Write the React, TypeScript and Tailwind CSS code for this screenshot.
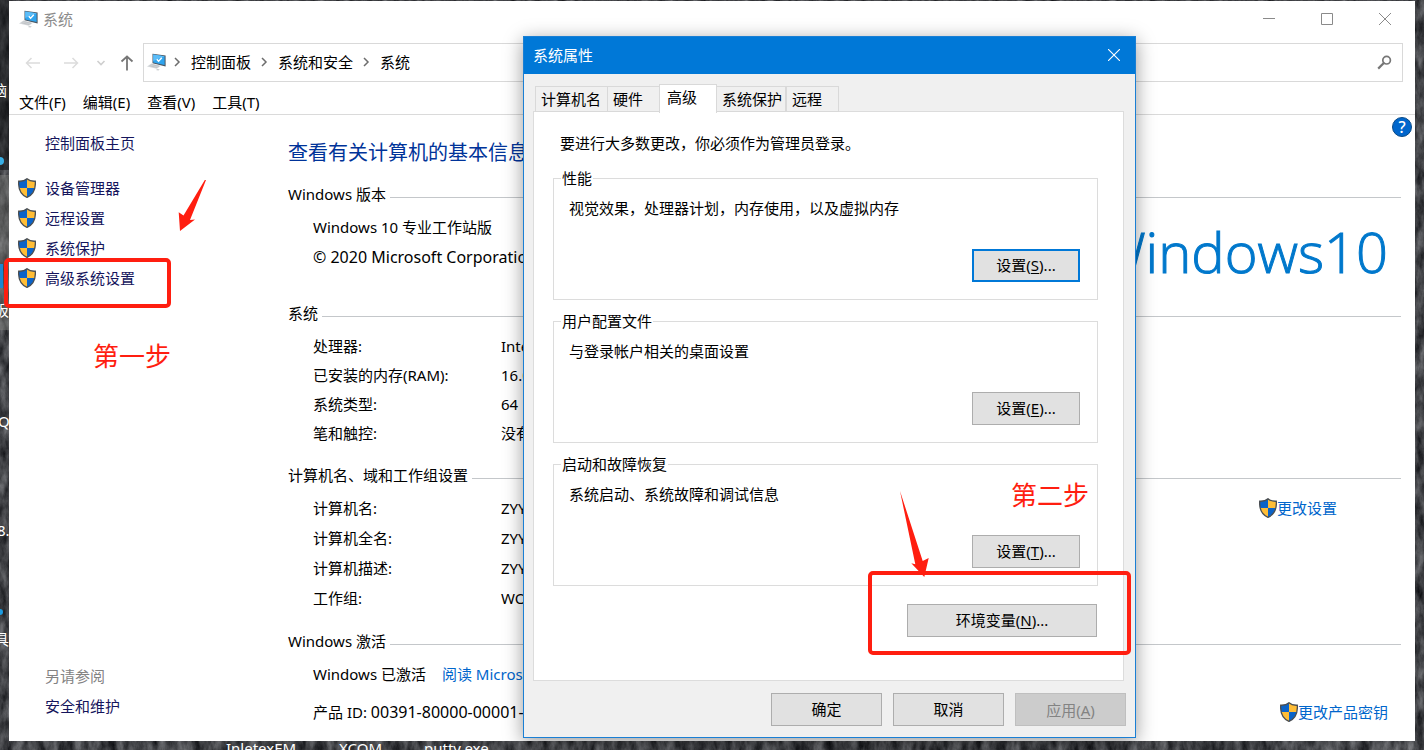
import React from "react";

const SHIELD = "M9 0.8C11 2.6 14 3.4 17.3 3.2C17.8 10.5 15.5 16.5 9 19.4C2.5 16.5 0.2 10.5 0.7 3.2C4 3.4 7 2.6 9 0.8Z";

function Shield({ id }: { id: string }) {
  return (
    <svg width="18" height="20" viewBox="0 0 18 20" className="shrink-0" aria-hidden="true">
      <clipPath id={id}>
        <path d={SHIELD} />
      </clipPath>
      <g clipPath={`url(#${id})`}>
        <path d="M0 0H9V10H0ZM9 10H18V20H9Z" fill="#0b63c8" />
        <path d="M9 0H18V10H9ZM0 10H9V20H0Z" fill="#ffbd36" />
      </g>
      <path d={SHIELD} fill="none" stroke="#4a4e52" strokeWidth="1.3" />
    </svg>
  );
}

function ComputerIcon() {
  return (
    <svg width="20" height="18" viewBox="0 0 20 18" className="shrink-0" aria-hidden="true">
      <path d="M5.5 0.8L18.6 2.6V13.4L5.5 10.2Z" fill="#4a5560" />
      <path d="M6.2 1.5L17.6 3.2V12L6.2 9.6Z" fill="#2fa4ee" />
      <path d="M6.2 1.5L17.6 3.2L6.2 8Z" fill="#5cbdf8" />
      <path d="M9.8 6.2L11.6 8.2L14.8 4.8" fill="none" stroke="#fff" strokeWidth="1.4" />
      <path d="M4.4 10.6L14 12.8L9.8 15.8L0 13.4Z" fill="#d3d6d9" />
      <path d="M4.5 11.6L12 13.3M2.8 12.8L10.4 14.6" stroke="#b3b7bb" strokeWidth="0.6" />
      <path d="M10.6 16L12.8 16.4L11.4 17.6L8.8 17Z" fill="#c6c9cc" />
    </svg>
  );
}

function Chevron() {
  return (
    <svg width="8" height="10" viewBox="0 0 8 10" className="shrink-0" aria-hidden="true">
      <path d="M2 1L6 5L2 9" fill="none" stroke="#6d6d6d" strokeWidth="1.5" />
    </svg>
  );
}

function Section({ title, className, children }: { title: string; className: string; children: React.ReactNode }) {
  return (
    <section className={className}>
      <div className="flex h-[34px] items-center gap-1">
        <h2 className="pb-[2px] whitespace-nowrap">{title}</h2>
        <span className="mt-1 h-px flex-1 bg-[#c4c7ca]" />
      </div>
      {children}
    </section>
  );
}

function Facts({ rows, rowClass }: { rows: string[][]; rowClass: string }) {
  return (
    <dl className="pl-[25px]">
      {rows.map(([name, value]) => (
        <div key={name} className={`flex items-center ${rowClass}`}>
          <dt className="w-[188px] shrink-0">{name}</dt>
          <dd className="whitespace-nowrap">{value}</dd>
        </div>
      ))}
    </dl>
  );
}

const tasks = ["设备管理器", "远程设置", "系统保护", "高级系统设置"];
const menus = ["文件(F)", "编辑(E)", "查看(V)", "工具(T)"];

function SystemWindow() {
  return (
    <div className="mx-[9px] mt-px mb-[9px] flex flex-1 flex-col bg-white">
      <header className="flex h-[37px] items-center pb-[2px] pl-[10px] text-[#8c8c8c]">
        <ComputerIcon />
        <h1 className="ml-1 flex-1">系统</h1>
        <div className="flex gap-[46px] pr-6 text-[#8a8a8a]">
          <button aria-label="最小化">
            <svg width="12" height="12" viewBox="0 0 12 12"><path d="M0 5.5H12" stroke="currentColor" /></svg>
          </button>
          <button aria-label="最大化">
            <svg width="12" height="12" viewBox="0 0 12 12"><path d="M.5 .5H11.5V11.5H.5Z" fill="none" stroke="currentColor" /></svg>
          </button>
          <button aria-label="关闭">
            <svg width="12" height="12" viewBox="0 0 12 12"><path d="M0 0L12 12M12 0L0 12" stroke="currentColor" /></svg>
          </button>
        </div>
      </header>

      <nav className="mt-[5px] flex h-[39px] items-center pr-3 pl-4">
        <button aria-label="后退" className="text-[#dcdcdc]">
          <svg width="16" height="12" viewBox="0 0 16 12"><path d="M6.5 1L1.5 6L6.5 11M1.5 6H15" fill="none" stroke="currentColor" strokeWidth="1.5" /></svg>
        </button>
        <button aria-label="前进" className="ml-[22px] text-[#dcdcdc]">
          <svg width="16" height="12" viewBox="0 0 16 12"><path d="M9.5 1L14.5 6L9.5 11M14.5 6H1" fill="none" stroke="currentColor" strokeWidth="1.5" /></svg>
        </button>
        <button aria-label="最近浏览的位置" className="ml-[17px] text-[#cfcfcf]">
          <svg width="10" height="8" viewBox="0 0 10 8"><path d="M1.5 2L5 5.5L8.5 2" fill="none" stroke="currentColor" strokeWidth="1.6" /></svg>
        </button>
        <button aria-label="上移" className="ml-[14px] text-[#767676]">
          <svg width="14" height="16" viewBox="0 0 14 16"><path d="M1.5 6.5L7 1.5L12.5 6.5M7 1.5V15.5" fill="none" stroke="currentColor" strokeWidth="1.8" /></svg>
        </button>
        <div className="ml-[9px] flex h-full w-[640px] items-center gap-[10px] border border-[#d9d9d9] pb-px pl-[3px]">
          <ComputerIcon />
          <span className="-ml-1 flex"><Chevron /></span>
          <a href="#panel">控制面板</a>
          <span className="-ml-px flex"><Chevron /></span>
          <a href="#security">系统和安全</a>
          <span className="-ml-px flex"><Chevron /></span>
          <a href="#system">系统</a>
        </div>
        <label className="ml-3 flex h-full min-w-0 flex-1 items-center border border-[#d9d9d9] pr-[10px]">
          <input type="search" aria-label="搜索控制面板" className="min-w-0 flex-1 outline-none" />
          <svg width="15" height="15" viewBox="0 0 15 15" fill="none" stroke="#767676" aria-hidden="true">
            <circle cx="9.6" cy="5.2" r="3.8" strokeWidth="1.7" />
            <path d="M6.8 8L1.2 13.6" strokeWidth="2.2" />
          </svg>
        </label>
      </nav>

      <div className="mt-[5px] flex h-[28px] gap-[17px] border-b border-[#dadada] pt-[5px] pl-[10px]">
        {menus.map((m) => (
          <button key={m} className="h-5 leading-5 whitespace-nowrap">{m}</button>
        ))}
      </div>

      <div className="flex flex-1">
        <aside className="flex w-[279px] shrink-0 flex-col pb-5 text-[#15155c]">
          <a href="#home" className="mt-[13px] ml-9 leading-[30px]">控制面板主页</a>
          <ul className="mt-[15px] ml-[9px]">
            {tasks.map((t, i) => (
              <li key={t}>
                <a href="#task" className="flex h-[30px] items-center gap-[9px]">
                  <Shield id={`task-shield-${i}`} />
                  {t}
                </a>
              </li>
            ))}
          </ul>
          <p className="mt-auto ml-9 leading-[30px] text-[#838383]">另请参阅</p>
          <a href="#maintenance" className="ml-9 leading-[30px]">安全和维护</a>
        </aside>

        <main className="min-w-0 flex-1 pr-[14px]">
          <div className="flex h-[63px] justify-between">
            <p className="pt-6 text-xl leading-7 whitespace-nowrap text-[#003399]">查看有关计算机的基本信息</p>
            <button aria-label="帮助" className="mt-[2px] -mr-[11px] flex size-5 items-center justify-center rounded-full border border-[#0a4a86] bg-[#0066cc] text-base leading-4 font-medium text-white">
              ?
            </button>
          </div>

          <Section title="Windows 版本" className="">
            <div className="flex h-[60px] justify-between">
              <div className="pl-[25px] leading-[30px] whitespace-nowrap">
                <p>Windows 10 专业工作站版</p>
                <p className="text-base leading-[30px]">© 2020 Microsoft Corporation</p>
              </div>
              <div className="mr-[13px] flex pt-[7px] font-['Open_Sans',sans-serif] text-[56px] leading-[64px] font-light whitespace-nowrap text-[#0078cc] [-webkit-text-stroke:1px_#0078cc]">
                <span>Windows</span>
                <span>10</span>
              </div>
            </div>
          </Section>

          <Section title="系统" className="mt-[25px]">
            <Facts
              rowClass="h-[29px]"
              rows={[["处理器:", "Intel"], ["已安装的内存(RAM):", "16.0"], ["系统类型:", "64"], ["笔和触控:", "没有"]]}
            />
          </Section>

          <Section title="计算机名、域和工作组设置" className="mt-3">
            <div className="flex justify-between">
              <Facts
                rowClass="h-[30px]"
                rows={[["计算机名:", "ZYY"], ["计算机全名:", "ZYY"], ["计算机描述:", "ZYY"], ["工作组:", "WOR"]]}
              />
              <a href="#rename" className="mr-16 flex h-[30px] items-center text-[#0066cc]">
                <Shield id="rename-shield" />
                更改设置
              </a>
            </div>
          </Section>

          <Section title="Windows 激活" className="mt-3">
            <p className="flex h-[30px] items-center gap-4 pl-[25px] whitespace-nowrap">
              Windows 已激活
              <a href="#license" className="text-[#0066cc]">阅读 Microsoft</a>
            </p>
            <div className="mt-2 flex h-[30px] items-center justify-between pl-[25px] whitespace-nowrap">
              <p>产品 ID: <span className="text-base leading-5">00391-80000-00001-</span></p>
              <a href="#key" className="mr-[13px] flex items-center text-[#0066cc]">
                <Shield id="key-shield" />
                更改产品密钥
              </a>
            </div>
          </Section>
        </main>
      </div>
    </div>
  );
}

function PushButton({ label, accessKey, className }: { label: string; accessKey?: string; className: string }) {
  return (
    <button className={`h-[33px] bg-[#e1e1e1] pb-px leading-5 ${className}`}>
      {label}
      {accessKey && (
        <>
          (<span className="underline underline-offset-2">{accessKey}</span>)...
        </>
      )}
    </button>
  );
}

const groups = [
  { title: "性能", text: "视觉效果，处理器计划，内存使用，以及虚拟内存", key: "S", button: "border-2 border-[#0078d7]" },
  { title: "用户配置文件", text: "与登录帐户相关的桌面设置", key: "E", button: "border border-[#adadad]" },
  { title: "启动和故障恢复", text: "系统启动、系统故障和调试信息", key: "T", button: "border border-[#adadad]" },
];

const tabs = [
  { name: "计算机名", className: "h-[26px] w-[72px] border-r-0 pl-[5px]" },
  { name: "硬件", className: "h-[26px] w-[52px] border-r-0 pl-[5px]" },
  { name: "高级", className: "relative -mb-px h-[29px] w-[58px] border-b-0 bg-white pb-1 pl-[7px]" },
  { name: "系统保护", className: "h-[26px] w-[69px] border-l-0 pl-[5px]" },
  { name: "远程", className: "h-[26px] w-[53px] pl-[5px]" },
];

function PropertiesDialog() {
  return (
    <div
      role="dialog"
      aria-label="系统属性"
      className="absolute top-[36px] left-[523px] w-[613px] border border-[#1a7fd4] bg-[#f0f0f0] shadow-[0_4px_18px_rgba(0,0,0,0.4)]"
    >
      <header className="flex h-[37px] items-center justify-between bg-[#0078d7] pr-[15px] pb-px pl-[9px] text-white">
        <h2>系统属性</h2>
        <button aria-label="关闭">
          <svg width="12" height="12" viewBox="0 0 12 12"><path d="M0 0L12 12M12 0L0 12" stroke="currentColor" strokeWidth="1.1" /></svg>
        </button>
      </header>

      <div className="pt-[9px] pr-[11px] pl-[9px]">
        <div role="tablist" className="flex h-[29px] items-end pl-[2px]">
          {tabs.map((t) => (
            <button
              key={t.name}
              role="tab"
              aria-selected={t.name === "高级"}
              className={`shrink-0 border border-[#d9d9d9] text-left leading-5 whitespace-nowrap ${t.className}`}
            >
              {t.name}
            </button>
          ))}
        </div>
        <div role="tabpanel" className="-mt-px border border-[#dcdcdc] bg-white pt-5 pr-[25px] pb-[43px] pl-[19px]">
          <p className="mb-[14px] pl-[7px] leading-[22px]">要进行大多数更改，你必须作为管理员登录。</p>
          <div className="flex flex-col gap-[11px]">
            {groups.map((g) => (
              <fieldset key={g.title} className="flex h-[132px] flex-col border border-[#dcdcdc] pr-[17px] pb-[18px] pl-[15px]">
                <legend className="-ml-2 px-px leading-[21px]">{g.title}</legend>
                <p className="mt-[9px] leading-5">{g.text}</p>
                <div className="mt-[31px] flex justify-end">
                  <PushButton label="设置" accessKey={g.key} className={`w-[108px] ${g.button}`} />
                </div>
              </fieldset>
            ))}
          </div>
          <div className="mt-[18px] flex justify-end pr-px">
            <PushButton label="环境变量" accessKey="N" className="w-[190px] border border-[#adadad]" />
          </div>
        </div>
      </div>

      <footer className="flex justify-end gap-[11px] pt-3 pr-[9px] pb-[11px]">
        <PushButton label="确定" className="w-[111px] border border-[#adadad]" />
        <PushButton label="取消" className="w-[111px] border border-[#adadad]" />
        <button disabled className="h-[33px] w-[111px] border border-[#bfbfbf] bg-[#cccccc] leading-5 text-[#838383]">
          应用(<span className="underline underline-offset-2">A</span>)
        </button>
      </footer>
    </div>
  );
}

function Wallpaper() {
  return (
    <svg className="absolute inset-0 h-full w-full" aria-hidden="true">
      <filter id="rock" x="0" y="0" width="100%" height="100%" colorInterpolationFilters="sRGB">
        <feTurbulence type="fractalNoise" baseFrequency="0.12 0.05" numOctaves="5" seed="7" />
        <feColorMatrix values="0.55 0 0 0 -0.02  0.55 0 0 0 -0.015  0.55 0 0 0 0  0 0 0 0 1" />
      </filter>
      <rect width="100%" height="100%" filter="url(#rock)" />
      <rect width="9" height="170" fill="#0b0d10" opacity="0.5" />
      <rect y="175" width="9" height="155" fill="#a3a39c" opacity="0.3" />
      <circle cx="0" cy="161" r="4" fill="#39b0e6" />
      <rect y="264" width="3" height="24" fill="#1c86d1" />
      <circle cx="0" cy="612" r="3" fill="#1c9be0" />
    </svg>
  );
}

function Annotations() {
  return (
    <>
      <div className="absolute top-[258px] left-[4px] h-[50px] w-[167px] rounded-[5px] border-4 border-[#ff1e10]" />
      <div className="absolute top-[571px] left-[868px] h-[84px] w-[263px] rounded-[5px] border-4 border-[#ff1e10]" />
      <svg className="absolute top-[180px] left-[178px]" width="30" height="52" viewBox="178 180 30 52" aria-hidden="true">
        <path d="M206 180L190 220L195 219.5L180 231L178.7 212.3L183.5 215.5L204.8 180Z" fill="#ff1e10" />
      </svg>
      <svg className="absolute top-[490px] left-[898px]" width="32" height="88" viewBox="898 490 32 88" aria-hidden="true">
        <path d="M900 491L922.7 561L928.7 558L924.3 577L911.3 563.3L915.3 564.3Z" fill="#ff1e10" />
      </svg>
      <p className="absolute top-[340px] left-[93px] text-[26px] leading-8 text-[#ff1e10]">第一步</p>
      <p className="absolute top-[479px] left-[1011px] text-[26px] leading-8 text-[#ff1e10]">第二步</p>
    </>
  );
}

function DesktopLabels() {
  return (
    <div className="text-white">
      <span className="absolute top-[80px] -left-[8px]">脑</span>
      <span className="absolute top-[300px] -left-[6px]">板</span>
      <span className="absolute top-[411px] -left-[2px]">Q</span>
      <span className="absolute top-[520px] -left-[3px]">8.</span>
      <span className="absolute top-[629px] -left-[6px]">具</span>
      <span className="absolute top-[738px] left-[226px]">InletexEM</span>
      <span className="absolute top-[738px] left-[339px]">XCOM</span>
      <span className="absolute top-[738px] left-[424px]">putty.exe</span>
    </div>
  );
}

export default function App() {
  return (
    <div className="relative flex h-screen min-h-[750px] flex-col overflow-hidden bg-[#3c3f42] font-['Noto_Sans','Noto_Sans_CJK_SC',sans-serif] text-[15px] leading-5 text-black">
      <Wallpaper />
      <DesktopLabels />
      <div className="relative flex flex-1 flex-col">
        <SystemWindow />
      </div>
      <PropertiesDialog />
      <Annotations />
    </div>
  );
}
